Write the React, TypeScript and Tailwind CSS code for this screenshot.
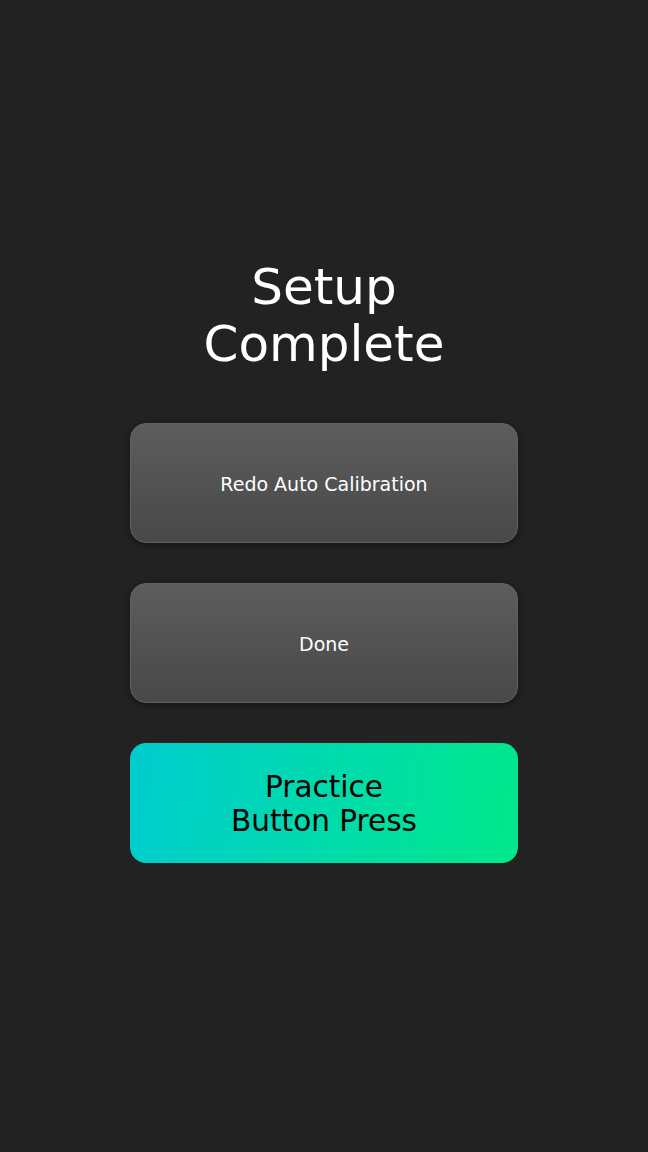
export default function App() {
	return (
		<div className="min-h-[1152px] w-full bg-[#222222] flex flex-col items-center pt-[259px] font-['DejaVu_Sans',sans-serif]">
			<h1 className="text-center text-[50px] leading-[57px] font-normal text-white">
				Setup
				<br />
				Complete
			</h1>

			<div className="mt-[50px] flex w-[388px] flex-col gap-10">
				<button className="h-[120px] rounded-2xl border border-[#626262] bg-gradient-to-b from-[#5d5d5d] to-[#484848] pt-0.5 text-[19px] text-white shadow-[0_2px_6px_rgba(0,0,0,0.45)]">
					Redo Auto Calibration
				</button>
				<button className="h-[120px] rounded-2xl border border-[#626262] bg-gradient-to-b from-[#5d5d5d] to-[#484848] pt-0.5 text-[19px] text-white shadow-[0_2px_6px_rgba(0,0,0,0.45)]">
					Done
				</button>
				<button className="h-[120px] rounded-2xl bg-[linear-gradient(100deg,#00cccf_0%,#00e88a_100%)] pt-0.5 text-[29.5px] leading-[34px] text-black">
					Practice
					<br />
					Button Press
				</button>
			</div>
		</div>
	);
}
